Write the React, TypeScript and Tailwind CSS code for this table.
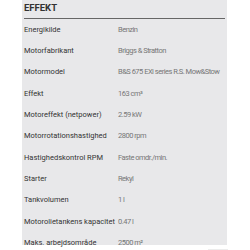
const rows: [string, string][] = [
  ["Energikilde", "Benzin"],
  ["Motorfabrikant", "Briggs & Stratton"],
  ["Motormodel", "B&S 675 EXi series R.S. Mow&Stow"],
  ["Effekt", "163 cm³"],
  ["Motoreffekt (netpower)", "2.59 kW"],
  ["Motorrotationshastighed", "2800 rpm"],
  ["Hastighedskontrol RPM", "Faste omdr./min."],
  ["Starter", "Rekyl"],
  ["Tankvolumen", "1 l"],
  ["Motorolietankens kapacitet", "0.47 l"],
  ["Maks. arbejdsområde", "2500 m²"],
];

export default function App() {
  return (
    <div className="w-[250px] h-[250px] bg-white overflow-hidden font-['Roboto',sans-serif]">
      <div className="ml-[22px] w-[205px] h-[245px] bg-[#e8e8ea] px-[2px]">
        <div className="h-[19px] border-b border-[#666] pt-[2px] text-[9.5px] font-bold leading-[11px] text-[#333]">
          EFFEKT
        </div>
        {rows.map(([label, value]) => (
          <div key={label} className="flex h-[21.3px] items-center whitespace-nowrap leading-none">
            <div className="w-[94px] shrink-0 text-[7.5px] text-[#333]">{label}</div>
            <div className="text-[7.5px] tracking-[-0.5px] text-[#777]">{value}</div>
          </div>
        ))}
      </div>
      <div className="ml-[208px] mt-[4px] h-[4px] w-[20px] bg-[#ececec]" />
    </div>
  );
}
